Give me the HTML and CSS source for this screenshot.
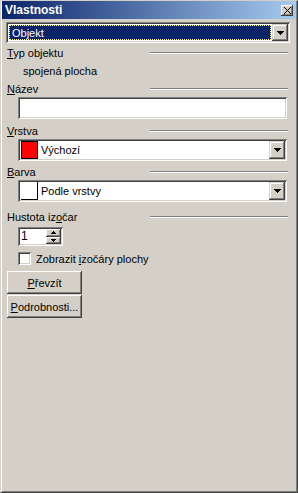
FILE: index.html
```html
<!DOCTYPE html>
<html lang="cs">
<head>
    <meta charset="UTF-8">
    <title>Vlastnosti</title>
    <link rel="stylesheet" href="styles.css">
</head>
<body>
    <div class="window">
        <div class="titlebar">
            <span class="title">Vlastnosti</span>
            <span class="close-btn">
                <svg width="7" height="7" viewBox="0 0 7 7" shape-rendering="crispEdges">
                    <path d="M0 0h1v1H0zM6 0h1v1H6zM1 1h1v1H1zM5 1h1v1H5zM2 2h1v1H2zM4 2h1v1H4zM3 3h1v1H3zM2 4h1v1H2zM4 4h1v1H4zM1 5h1v1H1zM5 5h1v1H5zM0 6h1v1H0zM6 6h1v1H6z" fill="#000"/>
                </svg>
            </span>
        </div>

        <div class="content">
            <div class="combo combo-main">
                <div class="combo-field">
                    <span class="focus">Objekt</span>
                </div>
                <span class="drop-btn">
                    <svg width="7" height="4" viewBox="0 0 7 4" shape-rendering="crispEdges">
                        <path d="M0 0h7v1H0zM1 1h5v1H1zM2 2h3v1H2zM3 3h1v1H3z" fill="#000"/>
                    </svg>
                </span>
            </div>

            <div class="group-label gl-first"><span><u>T</u>yp objektu</span><span class="rule"></span></div>
            <div class="value">spojená plocha</div>

            <div class="group-label"><span><u>N</u>ázev</span><span class="rule"></span></div>
            <div class="textbox"></div>

            <div class="group-label gl-wide"><span><u>V</u>rstva</span><span class="rule"></span></div>
            <div class="combo combo-indent">
                <div class="combo-field plain">
                    <span class="swatch red"></span>
                    <span class="combo-text">Výchozí</span>
                </div>
                <span class="drop-btn">
                    <svg width="7" height="4" viewBox="0 0 7 4" shape-rendering="crispEdges">
                        <path d="M0 0h7v1H0zM1 1h5v1H1zM2 2h3v1H2zM3 3h1v1H3z" fill="#000"/>
                    </svg>
                </span>
            </div>

            <div class="group-label"><span><u>B</u>arva</span><span class="rule"></span></div>
            <div class="combo combo-indent">
                <div class="combo-field plain">
                    <span class="swatch white"></span>
                    <span class="combo-text">Podle vrstvy</span>
                </div>
                <span class="drop-btn">
                    <svg width="7" height="4" viewBox="0 0 7 4" shape-rendering="crispEdges">
                        <path d="M0 0h7v1H0zM1 1h5v1H1zM2 2h3v1H2zM3 3h1v1H3z" fill="#000"/>
                    </svg>
                </span>
            </div>

            <div class="group-label gl-hustota"><span>Hustota iz<u>o</u>čar</span><span class="rule"></span></div>
            <div class="spinner">
                <span class="spin-value">1</span>
                <span class="spin-btns">
                    <span class="spin-btn">
                        <svg width="5" height="3" viewBox="0 0 5 3" shape-rendering="crispEdges">
                            <path d="M2 0h1v1H2zM1 1h3v1H1zM0 2h5v1H0z" fill="#000"/>
                        </svg>
                    </span>
                    <span class="spin-btn">
                        <svg width="5" height="3" viewBox="0 0 5 3" shape-rendering="crispEdges">
                            <path d="M0 0h5v1H0zM1 1h3v1H1zM2 2h1v1H2z" fill="#000"/>
                        </svg>
                    </span>
                </span>
            </div>

            <label class="checkrow">
                <span class="checkbox"></span>
                <span>Zobrazit <u>i</u>zočáry plochy</span>
            </label>

            <div class="btn btn-first"><span><u>P</u>řevzít</span></div>
            <div class="btn"><span><u>P</u>odrobnosti...</span></div>
        </div>
    </div>
</body>
</html>
```

FILE: styles.css
```css
* {
    margin: 0;
    padding: 0;
    box-sizing: border-box;
}

body {
    background-color: #d4d0c8;
    font-family: "Liberation Sans", Arial, sans-serif;
    font-size: 11px;
    color: #000;
}

u {
    text-decoration: underline;
    text-underline-offset: 1px;
}

.window {
    width: 298px;
    height: 493px;
    background-color: #d4d0c8;
    border: 1px solid;
    border-color: #d4d0c8 #404040 #404040 #d4d0c8;
    padding: 0 1px 1px 1px;
    box-shadow: inset 1px 0 #fff, inset -1px -1px #808080;
}

.titlebar {
    height: 18px;
    display: flex;
    align-items: center;
    justify-content: space-between;
    padding: 0 3px 0 3px;
    background: linear-gradient(to right, #0a246a, #a6caf0);
}

.title {
    color: #fff;
    font-weight: bold;
    font-size: 12px;
}

.close-btn {
    width: 12px;
    height: 11px;
    display: flex;
    align-items: center;
    justify-content: center;
    background-color: #d4d0c8;
    box-shadow: inset -1px -1px #404040, inset 1px 1px #fff, inset -2px -2px #808080;
}

.content {
    display: flex;
    flex-direction: column;
    padding: 0 8px 0 5px;
}

/* combo boxes */
.combo {
    height: 22px;
    display: flex;
    padding: 2px;
    background-color: #fff;
    box-shadow: inset 1px 1px #808080, inset -1px -1px #fff, inset 2px 2px #404040, inset -2px -2px #d4d0c8;
}

.combo-main {
    height: 21px;
    margin: 3px -2px 0 -1px;
}

.combo-indent {
    margin: 1px 1px 0 11px;
}

.combo-field {
    flex: 1;
    display: flex;
    align-items: center;
    padding: 1px;
}

.focus {
    flex: 1;
    align-self: stretch;
    display: flex;
    align-items: center;
    padding-left: 3px;
    background-color: #0a246a;
    color: #fff;
    outline: 1px dotted #ffff9a;
    outline-offset: -1px;
}

.combo-field.plain {
    padding: 1px 0 1px 1px;
}

.swatch {
    width: 17px;
    height: 18px;
    border-right: 1px solid #000;
    border-bottom: 1px solid #000;
}

.swatch.red {
    background-color: #ff0000;
    border: 1px solid #000;
}

.swatch.white {
    background-color: #fff;
}

.combo-text {
    padding-left: 3px;
}

.drop-btn {
    width: 16px;
    display: flex;
    align-items: center;
    justify-content: center;
    background-color: #d4d0c8;
    box-shadow: inset -1px -1px #404040, inset 1px 1px #d4d0c8, inset -2px -2px #808080, inset 2px 2px #fff;
}

/* group headings with etched rule */
.group-label {
    display: flex;
    align-items: center;
    line-height: 14px;
    margin-top: 4px;
}

.gl-first {
    margin-top: 3px;
}

.gl-wide {
    margin-top: 5px;
}

.gl-hustota {
    margin-top: 8px;
}

.rule {
    margin-left: auto;
    width: 138px;
    height: 2px;
    border-top: 1px solid #808080;
    border-bottom: 1px solid #fff;
}

.value {
    line-height: 14px;
    margin-top: 4px;
    padding-left: 16px;
}

.textbox {
    height: 22px;
    margin: 1px 1px 0 11px;
    background-color: #fff;
    box-shadow: inset 1px 1px #808080, inset -1px -1px #fff, inset 2px 2px #404040, inset -2px -2px #d4d0c8;
}

/* spinner */
.spinner {
    width: 45px;
    height: 19px;
    margin: 3px 0 0 11px;
    display: flex;
    padding: 2px;
    background-color: #fff;
    box-shadow: inset 1px 1px #808080, inset -1px -1px #fff, inset 2px 2px #404040, inset -2px -2px #d4d0c8;
}

.spin-value {
    flex: 1;
    padding-left: 1px;
    font-size: 12px;
    line-height: 15px;
}

.spin-btns {
    width: 15px;
    display: flex;
    flex-direction: column;
}

.spin-btn {
    flex: 1;
    display: flex;
    align-items: center;
    justify-content: center;
    background-color: #d4d0c8;
    box-shadow: inset -1px -1px #404040, inset 1px 1px #fff, inset -2px -2px #808080;
}

/* checkbox */
.checkrow {
    display: flex;
    align-items: center;
    gap: 5px;
    margin: 6px 0 0 11px;
    height: 13px;
}

.checkbox {
    width: 13px;
    height: 13px;
    background-color: #fff;
    box-shadow: inset 1px 1px #808080, inset -1px -1px #fff, inset 2px 2px #404040, inset -2px -2px #d4d0c8;
}

/* push buttons */
.btn {
    width: 75px;
    height: 23px;
    margin-top: 1px;
    display: flex;
    align-items: center;
    justify-content: center;
    background-color: #d4d0c8;
    box-shadow: inset -1px -1px #404040, inset 1px 1px #fff, inset -2px -2px #808080, inset 2px 2px #d4d0c8;
}

.btn-first {
    margin-top: 6px;
}
```
